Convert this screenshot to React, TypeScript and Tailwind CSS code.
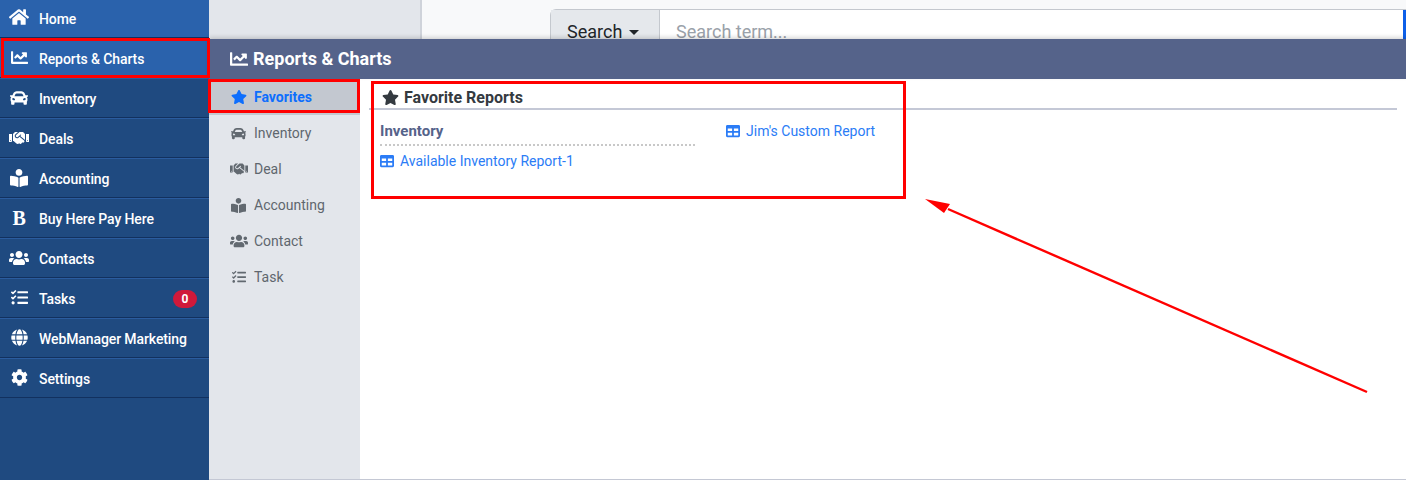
import { ReactNode } from 'react';
import {
  FaBookReader,
  FaCar,
  FaChartLine,
  FaCog,
  FaGlobe,
  FaHandshake,
  FaHome,
  FaStar,
  FaTable,
  FaTasks,
  FaUsers,
} from 'react-icons/fa';

const mainMenu: { label: string; icon: ReactNode; active?: boolean; badge?: string }[] = [
  { label: 'Home', icon: <FaHome size={20} />, active: true },
  { label: 'Reports & Charts', icon: <FaChartLine size={17} />, active: true },
  { label: 'Inventory', icon: <FaCar size={18} /> },
  { label: 'Deals', icon: <FaHandshake size={20} /> },
  { label: 'Accounting', icon: <FaBookReader size={18} /> },
  { label: 'Buy Here Pay Here', icon: <span className="font-['Liberation_Serif',serif] text-[20px] leading-none font-bold">B</span> },
  { label: 'Contacts', icon: <FaUsers size={20} /> },
  { label: 'Tasks', icon: <FaTasks size={17} />, badge: '0' },
  { label: 'WebManager Marketing', icon: <FaGlobe size={17} /> },
  { label: 'Settings', icon: <FaCog size={17} /> },
];

const subMenu = [
  { label: 'Inventory', icon: <FaCar size={15} /> },
  { label: 'Deal', icon: <FaHandshake size={18} /> },
  { label: 'Accounting', icon: <FaBookReader size={15} /> },
  { label: 'Contact', icon: <FaUsers size={18} /> },
  { label: 'Task', icon: <FaTasks size={14} /> },
];

function ReportLink({ label }: { label: string }) {
  return (
    <a className="flex items-center gap-[6px] text-sm leading-5 text-[#2b7cf6]">
      <FaTable size={14} />
      {label}
    </a>
  );
}

export default function App() {
  return (
    <div className="relative flex h-[480px] w-[1406px] overflow-hidden bg-white font-['Roboto',sans-serif]">
      {/* main sidebar */}
      <nav className="w-[209px] shrink-0 bg-[#1f4a80]">
        {mainMenu.map(item => (
          <div
            key={item.label}
            className={`flex h-10 items-center border-t border-b border-t-[#2a5c9f] border-b-[#12315f] pt-[2px] pr-3 text-sm font-medium tracking-[-0.1px] text-white first:h-[38px] first:border-t-0 first:pt-0 ${item.active ? 'bg-[#2a62ac]' : 'bg-[#1f4a80]'}`}
          >
            <span className="mb-[3px] flex w-[39px] shrink-0 justify-center pr-[1px]">{item.icon}</span>
            <span>{item.label}</span>
            {item.badge && (
              <span className="ml-auto flex h-[18px] w-6 items-center justify-center rounded-full bg-[#d0193a] text-xs font-bold">
                {item.badge}
              </span>
            )}
          </div>
        ))}
      </nav>

      <div className="flex min-w-0 flex-1 flex-col">
        {/* page behind the reports panel */}
        <div className="flex h-[39px] shrink-0 overflow-hidden bg-[#f8f9fa]">
          <div className="w-[213px] shrink-0 border-r-2 border-r-[#cfd3da] bg-[#e3e6eb]" />
          <div className="ml-[128px] mt-[9px] flex h-[44px] flex-1 rounded-tl-md border-t border-l border-[#c4c8ce] bg-white text-lg">
            <div className="flex w-[109px] shrink-0 items-center gap-[7px] border-r border-[#c4c8ce] bg-[#e5e8ec] pl-4 text-[#212529]">
              Search
              <span className="mt-[2px] border-x-[5px] border-t-[5px] border-x-transparent border-t-[#212529]" />
            </div>
            <div className="flex flex-1 items-center pl-4 text-[#9aa1a9]">Search term...</div>
            <div className="w-[3px] bg-[#0d5fe8]" />
          </div>
        </div>

        {/* reports panel */}
        <header className="flex h-10 shrink-0 items-center gap-[5px] bg-[#55638a] pl-[21px] text-lg font-bold text-white shadow-[0_-2px_4px_rgba(0,0,0,0.15)]">
          <FaChartLine size={18} />
          Reports &amp; Charts
        </header>

        <div className="flex min-h-0 flex-1 border-b border-b-[#c4c8d4]">
          <aside className="w-[151px] shrink-0 bg-[#e3e6eb] text-sm text-[#5f666e]">
            <div className="flex h-9 items-center gap-[7px] bg-[#c3c8d0] pl-[22px] font-bold text-[#0d6efd]">
              <FaStar size={16} />
              Favorites
            </div>
            {subMenu.map(item => (
              <div key={item.label} className="flex h-9 items-center">
                <span className="ml-[14px] flex w-[31px] shrink-0 justify-center text-[#626970]">{item.icon}</span>
                {item.label}
              </div>
            ))}
          </aside>

          <main className="min-w-0 flex-1 pt-[9px] pr-[9px] pl-[9px]">
            <h2 className="flex h-[22px] items-center gap-[5px] border-b-2 border-b-[#c4c8d6] pb-[1px] pl-[13px] text-base leading-5 font-bold text-[#343a40]">
              <FaStar size={17} />
              Favorite Reports
            </h2>
            <div className="mt-[11px] grid grid-cols-[315px_1fr] gap-x-[31px] pl-[11px]">
              <div>
                <div className="border-b-2 border-dotted border-b-[#c8c8c8] pb-[3px] text-[15px] leading-5 font-bold text-[#55638a]">Inventory</div>
                <div className="mt-[5px]">
                  <ReportLink label="Available Inventory Report-1" />
                </div>
              </div>
              <div>
                <ReportLink label="Jim's Custom Report" />
              </div>
            </div>
          </main>
        </div>
      </div>

      {/* red annotations drawn over the screenshot */}
      <div className="absolute top-[38px] left-[1px] h-10 w-[209px] border-[3px] border-[#ff0000]" />
      <div className="absolute top-[79px] left-[208px] h-[34px] w-[152px] border-[3px] border-[#ff0000]" />
      <div className="absolute top-[81px] left-[371px] h-[118px] w-[535px] border-[3px] border-[#ff0000]" />
      <svg className="absolute top-0 left-0" width="1406" height="480" viewBox="0 0 1406 480" fill="none">
        <path d="M948 209L1367 392" stroke="#ff0000" strokeWidth="2.4" />
        <path d="M925 199L950 204L944 213Z" fill="#ff0000" />
      </svg>
    </div>
  );
}
